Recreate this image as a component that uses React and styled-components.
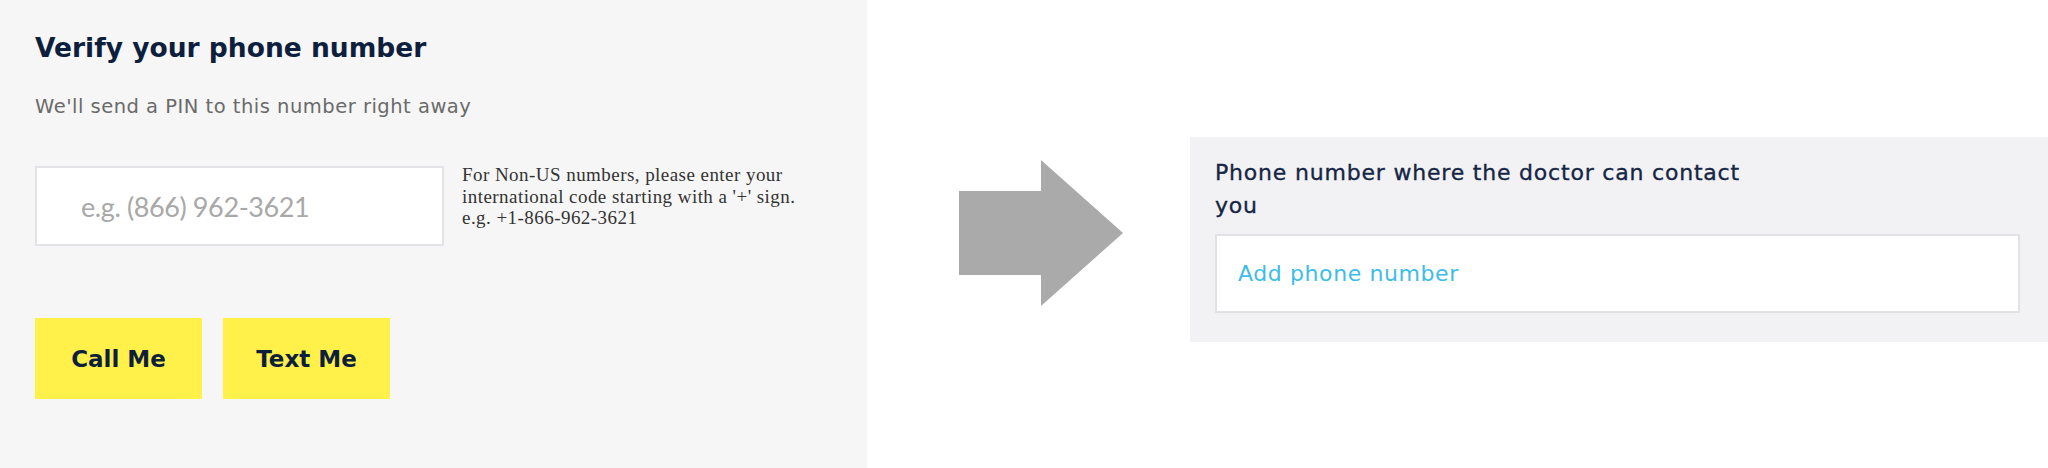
import styled, { createGlobalStyle } from "styled-components";

const GlobalStyle = createGlobalStyle`
  html, body {
    margin: 0;
    padding: 0;
    background: #ffffff;
  }
  * {
    box-sizing: border-box;
  }
`;

function Arrow() {
  return (
    <svg width="164" height="146" viewBox="0 0 164 146">
      <polygon points="0,31 82,31 82,0 164,73 82,146 82,115 0,115" fill="#aaaaaa" />
    </svg>
  );
}

export default function App() {
  return (
    <>
      <GlobalStyle />
      <Page>
        <VerifyPanel>
          <Title>Verify your phone number</Title>
          <Subtitle>We'll send a PIN to this number right away</Subtitle>
          <InputRow>
            <PhoneInput placeholder="e.g. (866) 962-3621" />
            <Hint>
              For Non-US numbers, please enter your
              <br />
              international code starting with a '+' sign.
              <br />
              e.g. +1-866-962-3621
            </Hint>
          </InputRow>
          <Buttons>
            <YellowButton>Call Me</YellowButton>
            <YellowButton>Text Me</YellowButton>
          </Buttons>
        </VerifyPanel>
        <ArrowColumn>
          <Arrow />
        </ArrowColumn>
        <ContactPanel>
          <Label>Phone number where the doctor can contact you</Label>
          <AddBox>Add phone number</AddBox>
        </ContactPanel>
      </Page>
    </>
  );
}

const Page = styled.div`
  display: flex;
  align-items: flex-start;
  width: 2048px;
  height: 468px;
  overflow: hidden;
`;

const VerifyPanel = styled.div`
  width: 867px;
  height: 468px;
  flex-shrink: 0;
  background: #f6f6f6;
  padding: 30px 35px 0;
  font-family: "DejaVu Sans", sans-serif;
`;

const Title = styled.h1`
  margin: 0;
  font-size: 26.5px;
  line-height: 36px;
  font-weight: 700;
  color: #0e1f3e;
`;

const Subtitle = styled.p`
  margin: 28px 0 0;
  font-size: 19.5px;
  line-height: 26px;
  letter-spacing: 0.5px;
  color: #6a6a6a;
`;

const InputRow = styled.div`
  display: flex;
  align-items: flex-start;
  gap: 18px;
  margin-top: 46px;
`;

const PhoneInput = styled.input`
  width: 409px;
  height: 80px;
  background: #ffffff;
  border: 2px solid #e4e4e8;
  padding: 0 0 0 44px;
  font-family: "Lato", sans-serif;
  font-size: 27px;
  letter-spacing: -0.4px;
  color: #333;
  outline: none;

  &::placeholder {
    color: #a8a8a8;
  }
`;

const Hint = styled.p`
  margin: -2px 0 0;
  font-family: "Liberation Serif", serif;
  font-size: 19px;
  line-height: 21.5px;
  letter-spacing: 0.45px;
  color: #333333;
`;

const Buttons = styled.div`
  display: flex;
  gap: 21px;
  margin-top: 72px;
`;

const YellowButton = styled.button`
  width: 167px;
  height: 81px;
  border: none;
  background: #fff04a;
  font-family: "DejaVu Sans", sans-serif;
  font-size: 23px;
  font-weight: 700;
  color: #0e1f3e;
  cursor: pointer;
`;

const ArrowColumn = styled.div`
  width: 323px;
  height: 468px;
  flex-shrink: 0;
  display: flex;
  align-items: center;
  padding-left: 92px;
  padding-bottom: 2px;
`;

const ContactPanel = styled.div`
  flex: 1;
  margin-top: 137px;
  height: 205px;
  background: #f2f2f4;
  padding: 19px 28px 0 25px;
  font-family: "DejaVu Sans", sans-serif;
`;

const Label = styled.div`
  max-width: 545px;
  font-size: 22px;
  line-height: 33px;
  letter-spacing: 0.8px;
  color: #152545;
  -webkit-text-stroke: 0.35px #152545;
`;

const AddBox = styled.div`
  margin-top: 12px;
  height: 79px;
  background: #ffffff;
  border: 2px solid #e2e2e6;
  display: flex;
  align-items: center;
  padding-left: 21px;
  font-size: 22px;
  letter-spacing: 0.6px;
  color: #3dbde9;
`;
